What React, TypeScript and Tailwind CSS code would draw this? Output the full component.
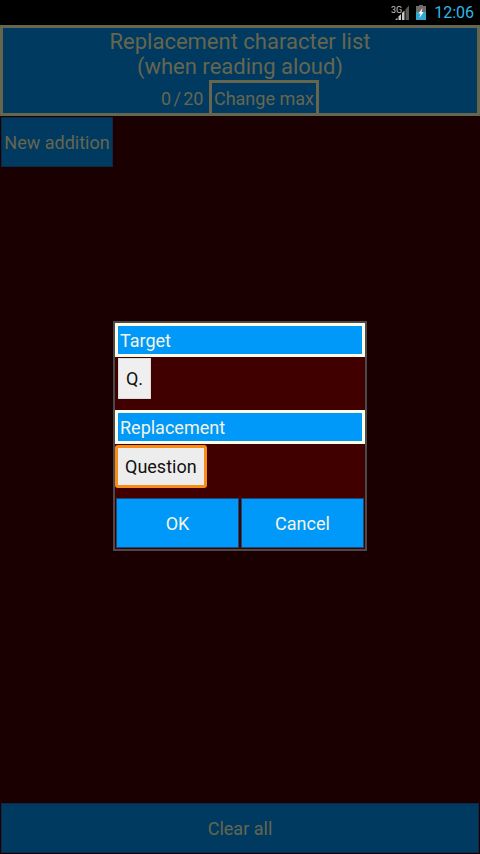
import React from "react";

function StatusIcons() {
  return (
    <div className="flex items-center">
      <svg width="18" height="16" viewBox="0 0 18 16" className="mr-[7px]">
        <text x="0" y="7.5" fontSize="9" fill="#c4c4c4" fontFamily="Roboto, sans-serif">3G</text>
        <path d="M4 15 L6.5 15 L6.5 12.5 Z" fill="#b0b0b0" />
        <path d="M7.5 15 L10 15 L10 9 L7.5 11.5 Z" fill="#c8c8c8" />
        <path d="M11 15 L13.5 15 L13.5 5.5 L11 8 Z" fill="#c8c8c8" />
        <path d="M14.5 15 L18 15 L18 0.5 L14.5 4.5 Z" fill="#5a5a5a" />
      </svg>
      <svg width="10" height="15" viewBox="0 0 10 15" className="mr-[8px]">
        <rect x="3" y="0" width="4" height="1" fill="#6d6d6d" />
        <rect x="0" y="1" width="10" height="6" fill="#6d6d6d" />
        <rect x="0" y="7" width="10" height="8" fill="#33a7cf" />
        <path d="M6.5 3 L2.5 8.5 L4.5 8.5 L3.5 13 L7.5 7 L5.5 7 Z" fill="#ffffff" />
      </svg>
      <span className="text-[16px] leading-none text-[#33b5e5]">12:06</span>
    </div>
  );
}

function Chip({ label, focused }: { label: string; focused?: boolean }) {
  return focused ? (
    <div className="flex h-[43px] w-fit items-center rounded-[3px] border-[3px] border-[#f78c17] bg-[#eeeded] px-[7px] text-[18px] text-[#111]">
      {label}
    </div>
  ) : (
    <div className="ml-[3px] mt-[1px] flex h-[41px] w-[33px] items-center justify-center border border-[#e0dcdc] bg-[#f0efef] text-[18px] text-[#111]">
      {label}
    </div>
  );
}

function DialogTitle({ label }: { label: string }) {
  return (
    <div className="border-[3px] border-[#fffde6] bg-[#0099f9] pl-[2px] pt-[1px] text-[18px] leading-[27px] text-[#f4f4e4]">
      {label}
    </div>
  );
}

export default function App() {
  return (
    <div className="relative flex h-[854px] w-[480px] flex-col overflow-hidden bg-[#1a0000] font-['Roboto',sans-serif]">
      <div className="flex h-[25px] shrink-0 items-center justify-end bg-black pr-[6px]">
        <StatusIcons />
      </div>

      <div className="flex h-[91px] shrink-0 flex-col items-center border-[3px] border-[#66664f] bg-[#003a60] text-[#66664f]">
        <div className="pt-[1px] text-center text-[22px] leading-[25px]">
          Replacement character list
          <br />
          (when reading aloud)
        </div>
        <div className="mt-auto flex items-end">
          <span className="mb-[2px] mr-[6px] text-[18px] leading-[24px] tracking-[-0.3px] [word-spacing:-1.5px]">0 / 20</span>
          <div className="flex h-[33px] w-[110px] items-center justify-center border-[3px] border-b-0 border-[#66664f] text-[18px]">
            Change max
          </div>
        </div>
      </div>

      <div className="flex flex-1 flex-col justify-between p-[1px]">
        <div className="flex h-[50px] w-[112px] items-center justify-center border border-[#0a2a4a] bg-[#003a60] text-[18px] text-[#66664f]">
          New addition
        </div>
        <div className="flex h-[50px] w-full items-center justify-center border border-[#0a2a4a] bg-[#003a60] text-[18px] text-[#66664f]">
          Clear all
        </div>
      </div>

      <div className="absolute left-[113px] top-[321px] flex h-[230px] w-[254px] flex-col border-2 border-[#4a4a4a] bg-[#400000]">
        <DialogTitle label="Target" />
        <div className="h-[53px]">
          <Chip label="Q." />
        </div>
        <DialogTitle label="Replacement" />
        <div className="h-[54px] pt-[1px]">
          <Chip label="Question" focused />
        </div>
        <div className="flex gap-[2px] px-[1px]">
          <div className="flex h-[50px] flex-1 items-center justify-center border border-[#1a4a7a] bg-[#0099f9] text-[18px] text-[#f4f4e4]">
            OK
          </div>
          <div className="flex h-[50px] flex-1 items-center justify-center border border-[#1a4a7a] bg-[#0099f9] text-[18px] text-[#f4f4e4]">
            Cancel
          </div>
        </div>
      </div>
    </div>
  );
}
